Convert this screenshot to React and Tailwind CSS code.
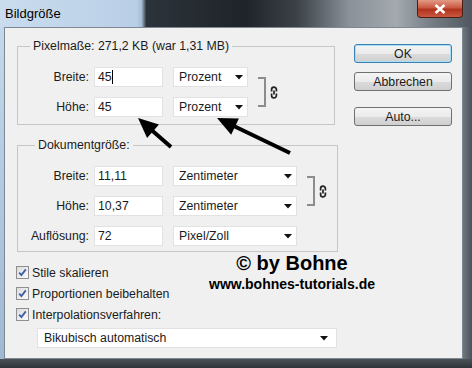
import React from "react";

// arrow head geometry for the two hand-drawn arrows
const arrow = (x1, y1, x2, y2, len = 20, half = 9) => {
  const dx = x2 - x1;
  const dy = y2 - y1;
  const d = Math.hypot(dx, dy);
  const ux = dx / d;
  const uy = dy / d;
  const bx = x2 - ux * len;
  const by = y2 - uy * len;
  const px = -uy * half;
  const py = ux * half;
  return {
    points: `${x2},${y2} ${bx + px},${by + py} ${bx - px},${by - py}`,
    bx: bx + ux * 2,
    by: by + uy * 2,
  };
};

const Label = ({ children }) => (
  <div className="w-[72px] text-right pr-[1px]">{children}</div>
);

const Field = ({ value, cursor }) => (
  <div className="ml-[4px] w-[69px] h-[20px] bg-white border border-[#e2e2e2] flex items-center pl-[3px]">
    <span>{value}</span>
    {cursor && <span className="w-px h-[14px] bg-black" />}
  </div>
);

const Select = ({ value, w }) => (
  <div
    className={`ml-[10px] ${w} h-[20px] bg-white border border-[#e2e2e2] flex items-center pl-[5px] pr-[4px]`}
  >
    <span className="flex-1">{value}</span>
    <svg width="8" height="5" viewBox="0 0 8 5">
      <path d="M0 0h8L4 4.5z" fill="#111" />
    </svg>
  </div>
);

const LinkIcon = () => (
  <svg width="8" height="13" viewBox="0 0 8 13" className="ml-[4px]">
    <path
      d="M1.6 5.6V3.6a2.4 2.4 0 0 1 4.8 0v2 M1.6 7.4v2a2.4 2.4 0 0 0 4.8 0v-2 M4 4.4v4.2"
      fill="none"
      stroke="#222"
      strokeWidth="1.7"
    />
  </svg>
);

const Bracket = () => (
  <div className="pt-[10px] flex items-center ml-[10px]">
    <div className="w-[8px] h-[30px] border-t-2 border-r-2 border-b-2 border-[#8c8c8c]" />
    <LinkIcon />
  </div>
);

const Row = ({ label, value, unit, w, cursor }) => (
  <div className="flex items-center h-[20px]">
    <Label>{label}</Label>
    <Field value={value} cursor={cursor} />
    <Select value={unit} w={w} />
  </div>
);

const Check = ({ children }) => (
  <div className="flex items-center h-[21px]">
    <div className="w-[13px] h-[13px] border border-[#8f8f8f] bg-[linear-gradient(135deg,#dcdcdc,#fafafa)] flex items-center justify-center">
      <svg width="9" height="9" viewBox="0 0 9 9">
        <path d="M1.2 4.6l2.2 2.4L7.8 1.4" fill="none" stroke="#3b5ea8" strokeWidth="1.8" />
      </svg>
    </div>
    <span className="ml-[3px]">{children}</span>
  </div>
);

const Button = ({ children, focus }) => (
  <div
    className={`w-[98px] h-[19px] rounded-[3px] border flex items-center justify-center bg-[linear-gradient(#f4f4f4,#ebebeb_50%,#dcdcdc_51%,#cfcfcf)] ${
      focus ? "border-[#3c7fb1] shadow-[inset_0_0_0_1px_#a6dff7]" : "border-[#707070]"
    }`}
  >
    {children}
  </div>
);

export default function App() {
  const a1 = arrow(171, 147, 138, 118);
  const a2 = arrow(290, 153, 217, 118);

  return (
    <div className="relative w-[472px] h-[368px] overflow-hidden flex flex-col font-['Liberation_Sans',Arial,sans-serif] text-[12.3px] text-[#1b1b1b] leading-[14px]">
      {/* title bar */}
      <div className="h-[27px] flex items-start bg-[linear-gradient(90deg,#cadcee_0%,#b9cfe6_29%,#a4bcd4_30%,#2c333a_31%,#1e2429_52%,#3c4248_63%,#8a9198_74%,#a3a9af_84%,#737a81_92%,#50575e_100%)]">
        <span className="pl-[5px] pt-[7px] text-[13px] leading-[14px] text-black">Bildgröße</span>
        <div className="ml-auto mr-[9px] w-[46px] h-[18px] rounded-b-[4px] border border-t-0 border-[#4a2118] bg-[linear-gradient(#e39a86,#c95a43_45%,#b2321d_55%,#c9583f)] flex items-center justify-center">
          <svg width="12" height="10" viewBox="0 0 12 10">
            <path d="M1.5 1l9 8M10.5 1l-9 8" stroke="#fff" strokeWidth="2.6" />
          </svg>
        </div>
      </div>

      <div className="flex flex-1">
        <div className="w-[4px] bg-[linear-gradient(#c4d8ec,#9fb9d3)]" />
        {/* client area */}
        <div className="w-[459px] h-[332px] bg-[#f0f0f0] border border-[#7d8893] flex">
          <div className="w-[337px] pl-[11px] flex flex-col">
            <fieldset className="ml-px mt-[11px] w-[318px] border border-[#c6c6c6] pt-[14px] pb-[7px]">
              <legend className="ml-[12px] px-[3px] leading-[14px]">
                Pixelmaße: 271,2 KB (war 1,31 MB)
              </legend>
              <div className="flex items-start">
                <div className="flex flex-col gap-[10px]">
                  <Row label="Breite:" value="45" unit="Prozent" w="w-[75px]" cursor />
                  <Row label="Höhe:" value="45" unit="Prozent" w="w-[75px]" />
                </div>
                <Bracket />
              </div>
            </fieldset>

            <fieldset className="ml-px mt-[13px] w-[321px] border border-[#c6c6c6] pt-[14px] pb-[5px]">
              <legend className="ml-[17px] px-[3px] leading-[14px]">Dokumentgröße:</legend>
              <div className="flex items-start">
                <div className="flex flex-col gap-[10px]">
                  <Row label="Breite:" value="11,11" unit="Zentimeter" w="w-[124px]" />
                  <Row label="Höhe:" value="10,37" unit="Zentimeter" w="w-[124px]" />
                  <Row label="Auflösung:" value="72" unit="Pixel/Zoll" w="w-[124px]" />
                </div>
                <Bracket />
              </div>
            </fieldset>

            <div className="mt-[10px] flex flex-col">
              <Check>Stile skalieren</Check>
              <Check>Proportionen beibehalten</Check>
              <Check>Interpolationsverfahren:</Check>
            </div>

            <div className="ml-[21px] mt-[3px] w-[300px] h-[20px] bg-white border border-[#e2e2e2] flex items-center pl-[6px] pr-[8px]">
              <span className="flex-1">Bikubisch automatisch</span>
              <svg width="8" height="5" viewBox="0 0 8 5">
                <path d="M0 0h8L4 4.5z" fill="#111" />
              </svg>
            </div>
          </div>

          <div className="ml-[12px] pt-[16px] flex flex-col">
            <Button focus>OK</Button>
            <div className="mt-[9px]">
              <Button>Abbrechen</Button>
            </div>
            <div className="mt-[16px]">
              <Button>Auto...</Button>
            </div>
          </div>
        </div>
        <div className="flex-1 bg-[linear-gradient(90deg,#6f777e,#4b535a)]" />
      </div>
      <div className="h-[9px] bg-[linear-gradient(#4a5258,#2f3439)]" />

      {/* watermark */}
      <div className="absolute left-[200px] top-[251px] w-[184px] text-center font-bold text-black">
        <div className="text-[20px] leading-[24px]">© by Bohne</div>
        <div className="text-[14px] leading-[17px] mt-[1px]">www.bohnes-tutorials.de</div>
      </div>

      {/* arrows */}
      <svg className="absolute left-0 top-0 pointer-events-none" width="472" height="368">
        <line x1="171" y1="147" x2={a1.bx} y2={a1.by} stroke="#000" strokeWidth="4" />
        <polygon points={a1.points} fill="#000" />
        <line x1="290" y1="153" x2={a2.bx} y2={a2.by} stroke="#000" strokeWidth="4" />
        <polygon points={a2.points} fill="#000" />
      </svg>
    </div>
  );
}
